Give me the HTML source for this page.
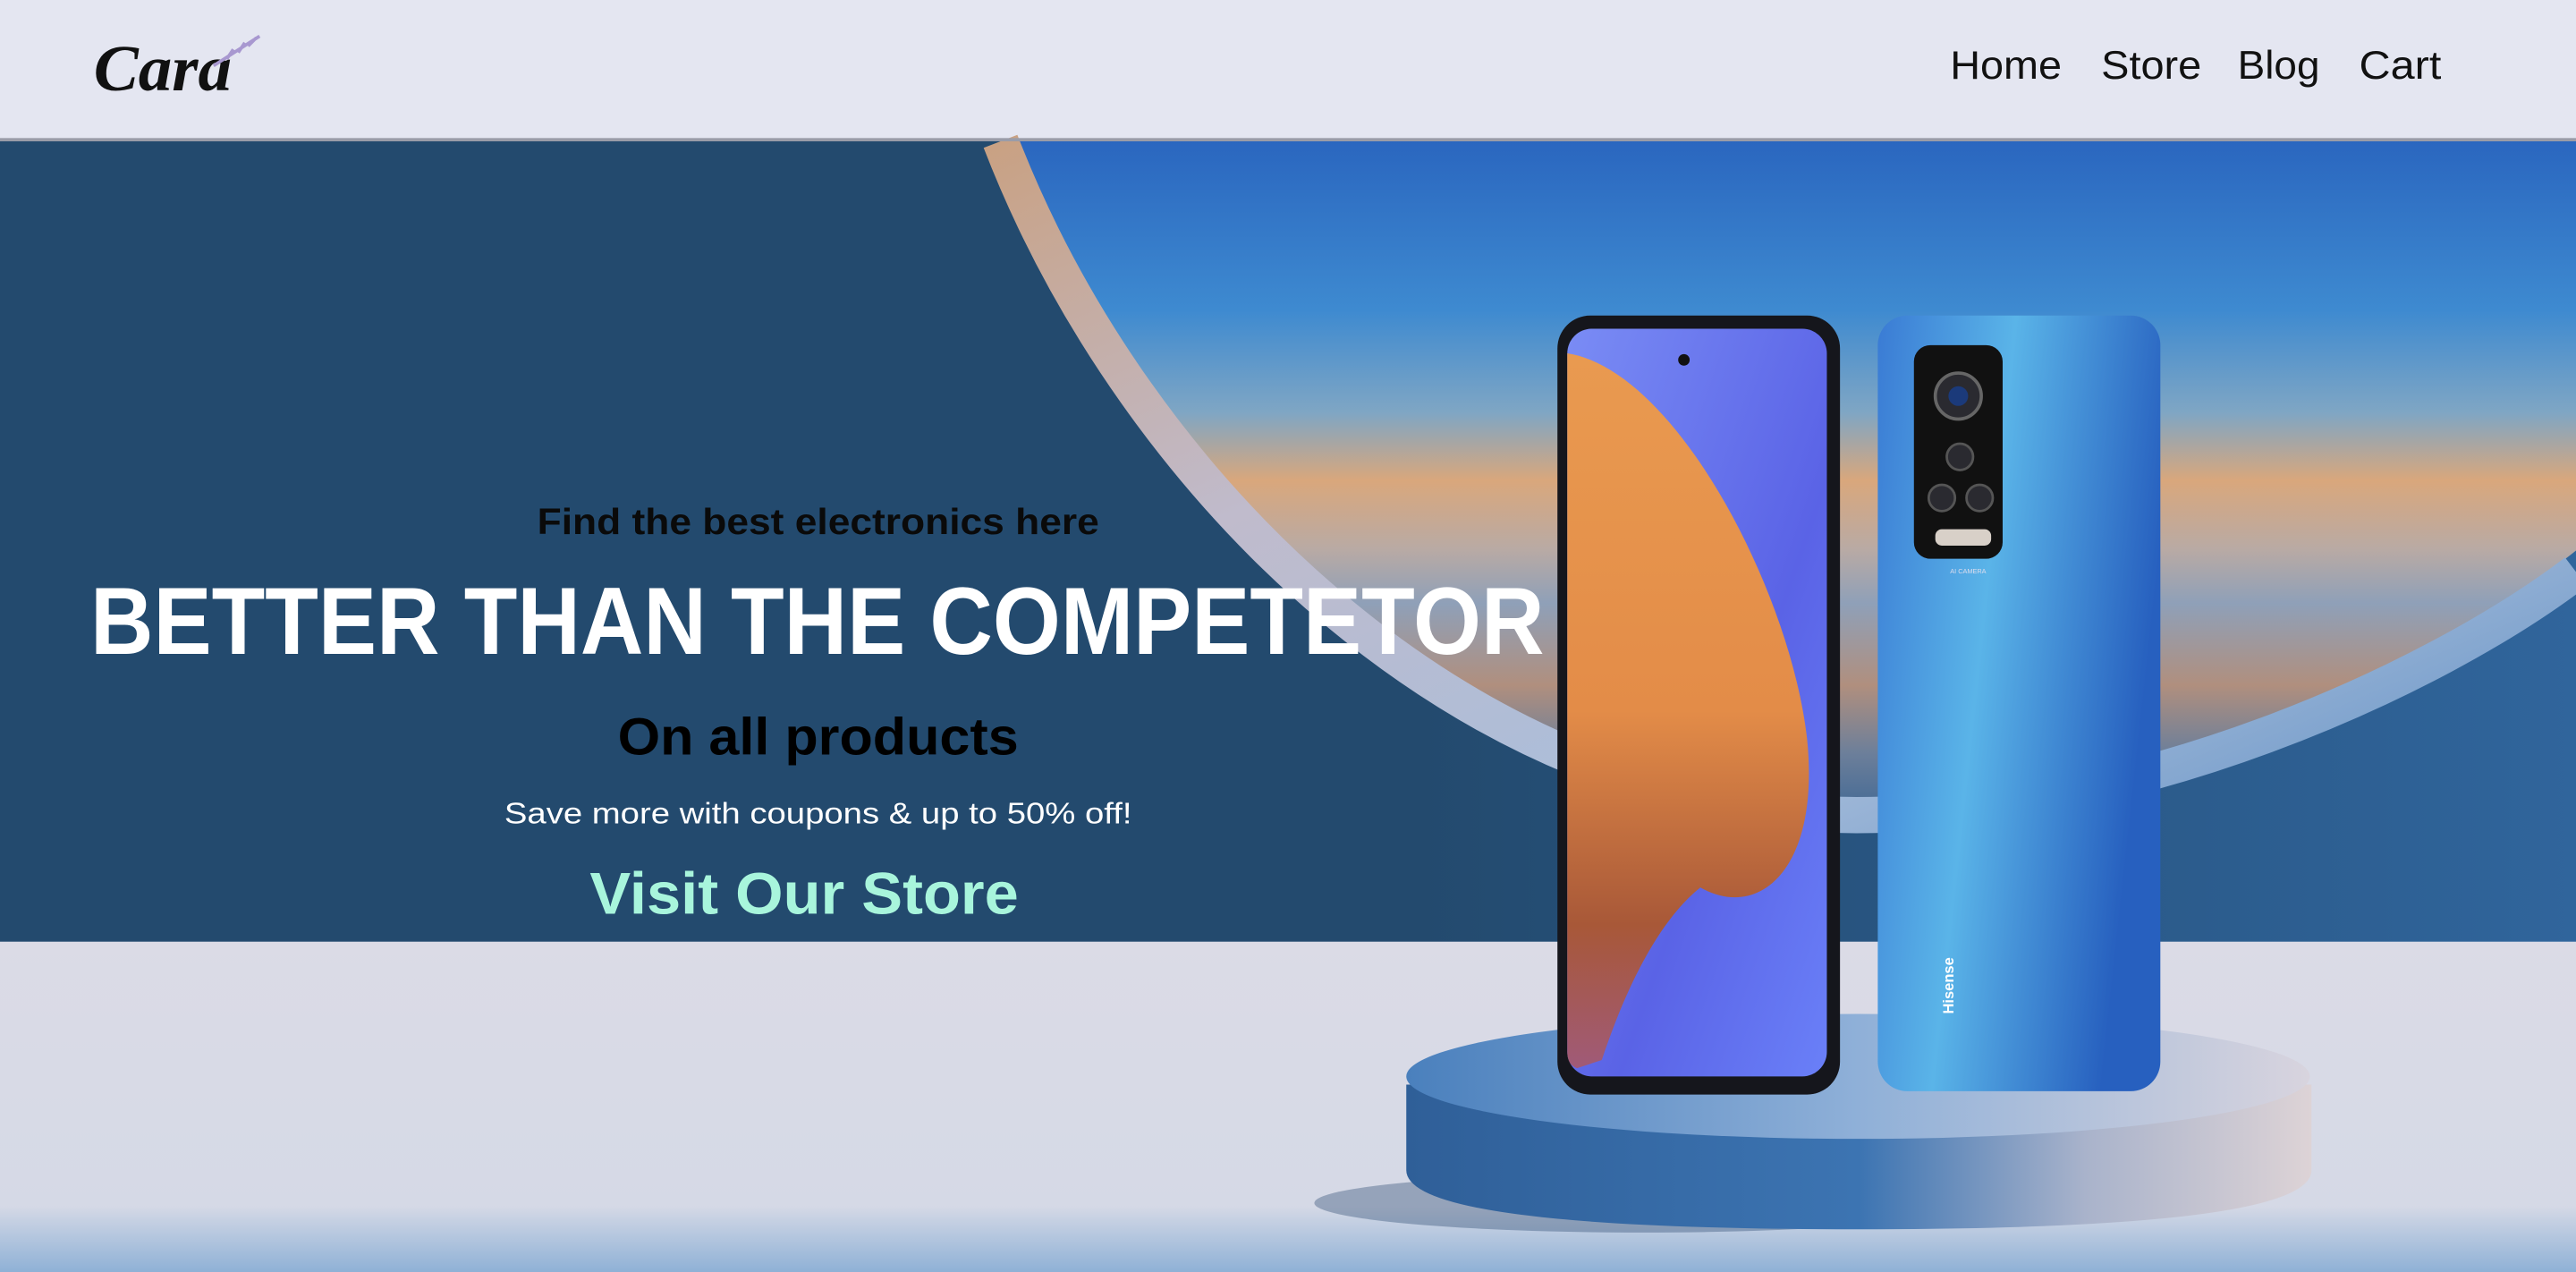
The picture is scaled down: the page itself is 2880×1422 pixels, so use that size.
<!DOCTYPE html>
<html><head><meta charset="utf-8"><style>
html,body{margin:0;padding:0;width:2880px;height:1422px;overflow:hidden;background:#e4e6f1}
svg{display:block}
</style></head><body>
<svg width="2880" height="1422" viewBox="0 0 1568 774" preserveAspectRatio="none" xmlns="http://www.w3.org/2000/svg">
<defs>
<linearGradient id="hero" x1="0" x2="1" y1="0" y2="0">
<stop offset="0" stop-color="#234a6e"/><stop offset="0.55" stop-color="#234a6e"/><stop offset="1" stop-color="#30659c"/></linearGradient>
<linearGradient id="sky" x1="0" x2="0" y1="85" y2="500" gradientUnits="userSpaceOnUse">
<stop offset="0" stop-color="#2a66bf"/><stop offset="0.25" stop-color="#3e8ad0"/><stop offset="0.4" stop-color="#7fa6c4"/>
<stop offset="0.5" stop-color="#d9a77c"/><stop offset="0.6" stop-color="#b9aaa4"/><stop offset="0.68" stop-color="#8fa0b8"/>
<stop offset="0.8" stop-color="#b08f7e"/><stop offset="0.9" stop-color="#6c7f9a"/><stop offset="1" stop-color="#3d6694"/></linearGradient>
<linearGradient id="band" x1="0" x2="1" y1="0" y2="1">
<stop offset="0" stop-color="#c9a183"/><stop offset="0.35" stop-color="#c0bbcc"/><stop offset="0.7" stop-color="#a9bedb"/><stop offset="1" stop-color="#5f8fc4"/></linearGradient>
<linearGradient id="low" x1="0" x2="0" y1="573" y2="774" gradientUnits="userSpaceOnUse">
<stop offset="0" stop-color="#dbdbe6"/><stop offset="0.8" stop-color="#d5d9e6"/><stop offset="1" stop-color="#8fb1d6"/></linearGradient>
<linearGradient id="scr" x1="0" x2="1" y1="0" y2="1">
<stop offset="0" stop-color="#7a8cf5"/><stop offset="0.6" stop-color="#5a63e6"/><stop offset="1" stop-color="#6a80f8"/></linearGradient>
<linearGradient id="org" x1="0" x2="0" y1="0" y2="1">
<stop offset="0" stop-color="#e99a50"/><stop offset="0.5" stop-color="#e38c48"/><stop offset="0.8" stop-color="#a85838"/><stop offset="1" stop-color="#a05a78"/></linearGradient>
<linearGradient id="back" x1="0" x2="1" y1="0" y2="0.3">
<stop offset="0" stop-color="#3a7bd4"/><stop offset="0.45" stop-color="#5ab4e8"/><stop offset="1" stop-color="#2760bf"/></linearGradient>
<linearGradient id="ped" x1="0" x2="1" y1="0" y2="0">
<stop offset="0" stop-color="#2f5f98"/><stop offset="0.5" stop-color="#3c74b2"/><stop offset="0.75" stop-color="#a9b3cb"/><stop offset="1" stop-color="#ddd3d6"/></linearGradient>
<linearGradient id="pedtop" x1="0" x2="1" y1="0" y2="0">
<stop offset="0" stop-color="#4a80bd"/><stop offset="0.5" stop-color="#8fb0d8"/><stop offset="1" stop-color="#d8d4de"/></linearGradient>
</defs>
<rect x="0" y="0" width="1568" height="84" fill="#e4e6f1"/>
<rect x="0" y="573" width="1568" height="201" fill="url(#low)"/>
<rect x="0" y="86" width="1568" height="487" fill="url(#hero)"/>
<path d="M620 86 C700 290 900 486 1130 486 C1300 486 1480 405 1568 335 L1568 86 Z" fill="url(#sky)"/>
<path d="M609 86 C690 296 893 496 1130 496 C1300 496 1480 415 1568 348" fill="none" stroke="url(#band)" stroke-width="22"/>
<rect x="0" y="84" width="1568" height="2" fill="#9a9ca8"/>
<!-- pedestal -->
<ellipse cx="1000" cy="732" rx="200" ry="18" fill="#1f3f66" opacity="0.35"/>
<path d="M856 660 L856 712 Q856 748 1131 748 Q1407 748 1407 712 L1407 660 Z" fill="url(#ped)"/>
<ellipse cx="1131" cy="655" rx="275" ry="38" fill="url(#pedtop)"/>
<!-- left phone -->
<rect x="948" y="192" width="172" height="474" rx="20" fill="#15161c"/>
<rect x="954" y="200" width="158" height="455" rx="15" fill="url(#scr)"/>
<path d="M954 215 C1020 225 1090 360 1100 450 C1108 530 1070 560 1035 540 C1010 560 990 600 975 645 L960 650 Q954 648 954 640 Z" fill="url(#org)"/>
<circle cx="1025" cy="219" r="3.5" fill="#111"/>
<!-- right phone -->
<rect x="1143" y="192" width="172" height="472" rx="18" fill="url(#back)"/>
<rect x="1165" y="210" width="54" height="130" rx="10" fill="#111"/>
<circle cx="1192" cy="241" r="14" fill="#2a2a30" stroke="#666" stroke-width="2"/><circle cx="1192" cy="241" r="6" fill="#1b3a7a"/>
<circle cx="1193" cy="278" r="8" fill="#2a2a30" stroke="#555" stroke-width="1.5"/>
<circle cx="1182" cy="303" r="8" fill="#2a2a30" stroke="#555" stroke-width="1.5"/>
<circle cx="1205" cy="303" r="8" fill="#2a2a30" stroke="#555" stroke-width="1.5"/>
<rect x="1178" y="322" width="34" height="10" rx="4" fill="#d8d0c8"/>
<text x="1198" y="349" font-family="Liberation Sans" font-size="4" fill="#dde" text-anchor="middle">AI CAMERA</text>
<text transform="translate(1189,617) rotate(-90)" font-family="Liberation Sans" font-weight="bold" font-size="9" fill="#fff">Hisense</text>
<!-- logo -->
<text x="57" y="55" font-family="Liberation Serif" font-style="italic" font-weight="bold" font-size="40" textLength="84" lengthAdjust="spacingAndGlyphs" fill="#111">Cara</text>
<path d="M130 40 L158 22 M138 36 l4 -6 M145 32 l4 -6 M151 28 l5 -5" stroke="#a898d0" stroke-width="2" fill="none"/>
<!-- nav -->
<g font-family="Liberation Sans" font-size="24" fill="#111">
<text x="1187" y="48" textLength="68" lengthAdjust="spacingAndGlyphs">Home</text>
<text x="1279" y="48" textLength="61" lengthAdjust="spacingAndGlyphs">Store</text>
<text x="1362" y="48" textLength="50" lengthAdjust="spacingAndGlyphs">Blog</text>
<text x="1436" y="48" textLength="50" lengthAdjust="spacingAndGlyphs">Cart</text>
</g>
<!-- hero text -->
<g font-family="Liberation Sans" font-weight="bold">
<text x="327" y="325" font-size="22" textLength="342" lengthAdjust="spacingAndGlyphs" fill="#0a0a0a">Find the best electronics here</text>
<text x="55" y="398" font-size="58" textLength="885" lengthAdjust="spacingAndGlyphs" fill="#fff">BETTER THAN THE COMPETETOR</text>
<text x="376" y="459" font-size="32" textLength="244" lengthAdjust="spacingAndGlyphs" fill="#000">On all products</text>
<text x="359" y="556" font-size="36" textLength="261" lengthAdjust="spacingAndGlyphs" fill="#a8f5dc">Visit Our Store</text>
</g>
<text x="307" y="501" font-family="Liberation Sans" font-size="18" textLength="382" lengthAdjust="spacingAndGlyphs" fill="#fff">Save more with coupons &amp; up to 50% off!</text>
</svg>
</body></html>
